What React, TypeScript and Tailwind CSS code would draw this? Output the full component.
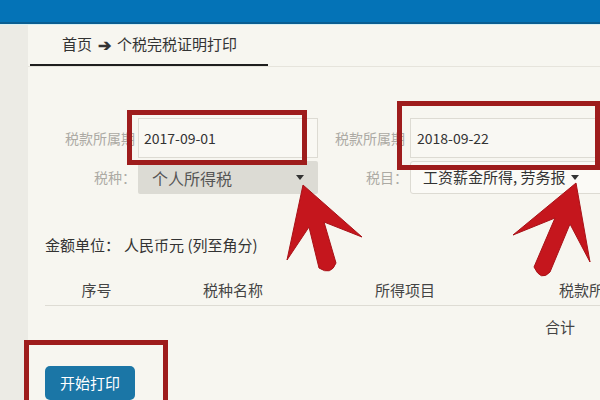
import React from 'react';

const Caret = () => (
  <span className="inline-block w-0 h-0 border-l-[4px] border-r-[4px] border-t-[5px] border-l-transparent border-r-transparent border-t-[#333]" />
);

const App: React.FC = () => {
  return (
    <div className="relative w-[600px] h-[400px] overflow-hidden bg-[#f7f6f0] font-['Noto_Sans_CJK_SC',sans-serif]">
      {/* top bar */}
      <div className="h-[24px] bg-[#0473b7] border-b-2 border-[#0a5e92]" />
      <div className="h-[1px] bg-[#d8f0f4]" />

      <div className="flex h-[375px]">
        <div className="w-[28px] shrink-0 bg-[#ecebe5]" />
        <div className="flex-1 min-w-0 overflow-hidden flex flex-col">
          {/* breadcrumb */}
          <div className="border-b border-[#e6e4dc]">
            <div className="w-[238px] ml-[2px] pl-[32px] pt-[9px] pb-[10px] border-b-2 border-[#1e1e1e] text-[15px] leading-[20px] text-[#333] flex items-center gap-[6px]">
              <span>首页</span>
              <span className="text-[16px] font-bold">➔</span>
              <span>个税完税证明打印</span>
            </div>
          </div>

          {/* form */}
          <div className="mt-[51px] flex">
            <div className="flex flex-col gap-[3px] shrink-0">
              <div className="flex items-center">
                <div className="w-[110px] text-right pr-[3px] text-[14px] text-[#acaaa4]">税款所属期</div>
                <div className="w-[180px] h-[40px] border border-[#dddbd3] bg-[#f9f8f3] flex items-center pl-[5px] text-[14px] text-[#333]">2017-09-01</div>
              </div>
              <div className="flex items-center">
                <div className="w-[110px] text-right pr-[2px] text-[14px] text-[#acaaa4]">税种：</div>
                <div className="w-[180px] h-[33px] bg-[#dcdbd4] rounded-[2px] flex items-center justify-between pl-[14px] pr-[14px] text-[16px] text-[#555]">
                  <span>个人所得税</span>
                  <Caret />
                </div>
              </div>
            </div>
            <div className="flex flex-col gap-[3px] shrink-0">
              <div className="flex items-center">
                <div className="w-[92px] text-right pr-[5px] text-[14px] text-[#acaaa4]">税款所属期</div>
                <div className="w-[200px] h-[40px] border border-[#dddbd3] bg-[#f9f8f3] flex items-center pl-[6px] text-[14px] text-[#333]">2018-09-22</div>
              </div>
              <div className="flex items-center">
                <div className="w-[92px] text-right pr-[2px] text-[14px] text-[#acaaa4]">税目：</div>
                <div className="w-[200px] h-[33px] bg-[#fbfaf6] border border-[#dddbd3] rounded-[3px] flex items-center pl-[12px] gap-[5px] text-[15px] text-[#333] whitespace-nowrap">
                  <span>工资薪金所得, 劳务报</span>
                  <Caret />
                </div>
              </div>
            </div>
          </div>

          {/* amount unit */}
          <div className="mt-[40px] ml-[17px] text-[15px] leading-[22px] text-[#333] flex gap-[4px]">
            <span>金额单位：</span>
            <span>人民币元 (列至角分)</span>
          </div>

          {/* table */}
          <div className="mt-[19px] ml-[17px] flex border-b border-[#dedcd4] h-[37px] items-center text-[15px] text-[#444] whitespace-nowrap">
            <div className="w-[103px] shrink-0 text-center">序号</div>
            <div className="w-[170px] shrink-0 text-center">税种名称</div>
            <div className="w-[174px] shrink-0 text-center">所得项目</div>
            <div className="w-[140px] shrink-0 pl-[67px]">税款所属期</div>
          </div>
          <div className="ml-[517px] mt-[10px] text-[15px] leading-[22px] text-[#444]">合计</div>

          {/* button */}
          <div className="mt-[28px] ml-[17px]">
            <button className="w-[90px] h-[34px] rounded-[5px] bg-[#1b76a6] text-white text-[15px]">开始打印</button>
          </div>
        </div>
      </div>

      {/* annotation boxes */}
      <div className="absolute left-[127px] top-[110px] w-[180px] h-[55px] border-[5px] border-[#9e1c1c]" />
      <div className="absolute left-[397px] top-[101px] w-[203px] h-[69px] border-[5px] border-[#9e1c1c]" />
      <div className="absolute left-[24px] top-[340px] w-[144px] h-[70px] border-[5px] border-[#9e1c1c]" />

      {/* annotation arrows */}
      <svg className="absolute left-0 top-0" width="600" height="400" viewBox="0 0 600 400">
        <path d="M303,185 L362,237 L324,222 L336,263 Q331,276 319,268 L309,227 L287,260 Z" fill="#c5161d" stroke="#a81218" strokeWidth="1" strokeLinejoin="round" />
        <path d="M576,183 L590,262 L570,224 L550,272 Q541,282 534,267 L555,218 L513,235 Z" fill="#c5161d" stroke="#a81218" strokeWidth="1" strokeLinejoin="round" />
      </svg>
    </div>
  );
};

export default App;
